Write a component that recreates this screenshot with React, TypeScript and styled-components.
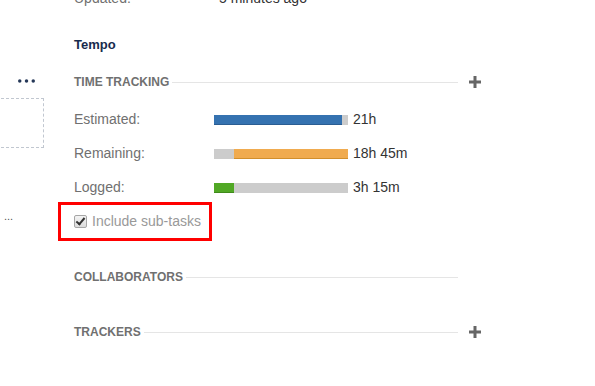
import React from 'react'
import styled, { createGlobalStyle } from 'styled-components'

const GlobalStyle = createGlobalStyle`
  html, body {
    margin: 0;
    padding: 0;
    background: #fff;
    overflow: hidden;
  }
  body {
    font-family: 'Liberation Sans', Arial, sans-serif;
    font-size: 14px;
    color: #333;
  }
`

const Page = styled.div`
  display: flex;
  width: 595px;
  height: 386px;
  overflow: hidden;
`

const LeftRail = styled.div`
  width: 58px;
  flex-shrink: 0;
  display: flex;
  flex-direction: column;
  padding-top: 79px;
`

const MoreDots = styled.svg`
  display: block;
  margin-left: 18px;
`

const DropZone = styled.div`
  margin-top: 15px;
  margin-left: -4px;
  width: 46px;
  height: 48px;
  border: 1px dashed #c1c7d0;
`

const Ellipsis = styled.div`
  margin-top: 61px;
  margin-left: 4px;
  font-size: 11px;
  line-height: 14px;
  color: #555;
`

const Main = styled.div`
  width: 407px;
  padding-left: 16px;
  display: flex;
  flex-direction: column;
`

const MetaRow = styled.div`
  display: grid;
  grid-template-columns: 145px auto;
  margin-top: -12px;
  line-height: 20px;
`

const MetaLabel = styled.span`
  color: #707070;
`

const MetaValue = styled.span`
  color: #333;
`

const Title = styled.h2`
  margin: 27px 0 0;
  font-size: 13px;
  line-height: 20px;
  font-weight: bold;
  color: #172b4d;
`

const SectionHeader = styled.div<{ $gap: number }>`
  display: flex;
  align-items: center;
  height: 20px;
  margin-top: ${p => p.$gap}px;
`

const SectionTitle = styled.span`
  font-size: 12px;
  font-weight: bold;
  text-transform: uppercase;
  color: #707070;
  line-height: 20px;
`

const Rule = styled.span`
  flex: 1;
  height: 1px;
  margin-left: 3px;
  background: #e5e5e5;
`

const AddSlot = styled.span`
  width: 12px;
  height: 12px;
  margin-left: 11px;
  display: flex;
`

const TrackRow = styled.div<{ $gap: number }>`
  display: grid;
  grid-template-columns: 140px 134px auto;
  align-items: center;
  height: 20px;
  margin-top: ${p => p.$gap}px;
  line-height: 20px;
`

const TrackLabel = styled.span`
  color: #707070;
`

const TrackValue = styled.span`
  color: #333;
  padding-left: 5px;
`

const Bar = styled.div`
  display: flex;
  height: 10px;
  margin-top: 1px;
  background: #ccc;
`

const Segment = styled.div<{ $color: string; $edge: string }>`
  height: 10px;
  box-sizing: border-box;
  background: ${p => p.$color};
  border-bottom: 1px solid ${p => p.$edge};
`

const Highlight = styled.label`
  align-self: flex-start;
  display: flex;
  align-items: center;
  margin: 5px 0 0 -16px;
  padding: 6px 8px 7px 13px;
  border: 3px solid #ff0000;
  height: 20px;
  line-height: 20px;
  color: #999;
`

const Check = styled.input`
  appearance: none;
  position: relative;
  box-sizing: border-box;
  width: 13px;
  height: 13px;
  margin: 0 5px 0 0;
  border: 1px solid #a6a6a6;
  border-radius: 2px;
  background: linear-gradient(#f4f4f4, #dcdcdc);

  &:checked::after {
    content: '';
    position: absolute;
    left: 3px;
    top: 0px;
    width: 3px;
    height: 7px;
    border: solid #333;
    border-width: 0 2px 2px 0;
    transform: rotate(40deg);
  }
`

const PlusIcon = () => (
  <svg width="12" height="12" viewBox="0 0 12 12">
    <rect x="4.5" y="0" width="3" height="12" fill="#666" />
    <rect x="0" y="4.5" width="12" height="3" fill="#666" />
  </svg>
)

type Section = { title: string; add: boolean; gap: number }

const Header = ({ title, add, gap }: Section) => (
  <SectionHeader $gap={gap}>
    <SectionTitle>{title}</SectionTitle>
    <Rule />
    <AddSlot>{add && <PlusIcon />}</AddSlot>
  </SectionHeader>
)

const BLUE = ['#3572b0', '#2a5d92']
const ORANGE = ['#f0ab4f', '#d18f2c']
const GREEN = ['#51a825', '#3f8a1b']
const GRAY = ['#cccccc', '#cccccc']

const rows = [
  { label: 'Estimated:', value: '21h', parts: [[128, BLUE]] },
  { label: 'Remaining:', value: '18h 45m', parts: [[20, GRAY], [114, ORANGE]] },
  { label: 'Logged:', value: '3h 15m', parts: [[20, GREEN]] },
] as { label: string; value: string; parts: [number, string[]][] }[]

export default function App() {
  return (
    <Page>
      <GlobalStyle />
      <LeftRail>
        <MoreDots width="17" height="4" viewBox="0 0 17 4">
          <circle cx="1.75" cy="2" r="1.75" fill="#253858" />
          <circle cx="8.5" cy="2" r="1.75" fill="#253858" />
          <circle cx="15.25" cy="2" r="1.75" fill="#253858" />
        </MoreDots>
        <DropZone />
        <Ellipsis>...</Ellipsis>
      </LeftRail>
      <Main>
        <MetaRow>
          <MetaLabel>Updated:</MetaLabel>
          <MetaValue>5 minutes ago</MetaValue>
        </MetaRow>
        <Title>Tempo</Title>
        <Header title="Time Tracking" add gap={17} />
        {rows.map((r, i) => (
          <TrackRow key={r.label} $gap={i === 0 ? 17 : 14}>
            <TrackLabel>{r.label}</TrackLabel>
            <Bar>
              {r.parts.map(([w, c], j) => (
                <Segment key={j} $color={c[0]} $edge={c[1]} style={{ width: w }} />
              ))}
            </Bar>
            <TrackValue>{r.value}</TrackValue>
          </TrackRow>
        ))}
        <Highlight>
          <Check type="checkbox" defaultChecked />
          Include sub-tasks
        </Highlight>
        <Header title="Collaborators" add={false} gap={26} />
        <Header title="Trackers" add gap={35} />
      </Main>
    </Page>
  )
}
